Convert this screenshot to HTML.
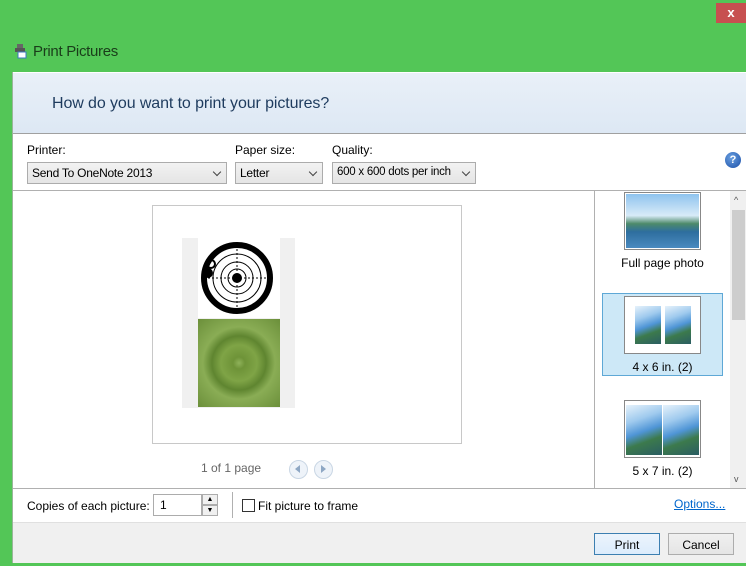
<!DOCTYPE html>
<html><head><style>
*{box-sizing:border-box;margin:0;padding:0}
body{width:746px;height:566px;background:#53c657;position:relative;overflow:hidden;font-family:"Liberation Sans",sans-serif;font-size:12px;color:#000}
.a{position:absolute}
.sel{position:absolute;height:22px;border:1px solid #acacac;background:linear-gradient(#f2f2f2,#e5e5e5);padding:3px 0 0 4px;font-size:12px;letter-spacing:-0.25px;white-space:nowrap}
.sel:after{content:"";position:absolute;right:6px;top:6px;width:5px;height:5px;border-right:1px solid #444;border-bottom:1px solid #444;transform:rotate(45deg)}
.btn{position:absolute;height:22px;border:1px solid #adadad;background:linear-gradient(#f0f0f0,#e5e5e5);text-align:center;padding-top:4px;font-size:12px}
.th{position:absolute;border:1px solid #888;background:#fff}
.ph{position:absolute;background:linear-gradient(160deg,#e6f2fb 0%,#9fcaee 30%,#4f95d6 52%,#3c7a4c 70%,#2a5d63 100%)}
</style></head><body>
<div class="a" style="left:716px;top:3px;width:30px;height:20px;background:#c75050;color:#fff;font-size:13px;text-align:center;line-height:20px;font-weight:bold">x</div>
<svg class="a" style="left:15px;top:44px" width="12" height="15"><rect x="2" y="0" width="6" height="4" fill="#666"/><rect x="0" y="4" width="10" height="4" fill="#555"/><rect x="3" y="8" width="8" height="6" fill="#fff" stroke="#3b7bbf"/></svg>
<div class="a" style="left:33px;top:43px;font-size:15px;color:#1a3d1a;letter-spacing:-0.3px">Print Pictures</div>
<div class="a" style="left:12px;top:72px;width:734px;height:491px;background:#fff;border-left:1px solid #9ab59a"></div>
<div class="a" style="left:13px;top:73px;width:733px;height:61px;background:linear-gradient(#e9f0f8,#dde8f4);border-bottom:1px solid #a0a0a0"></div>
<div class="a" style="left:52px;top:95px;font-size:16px;color:#1e3b5e;letter-spacing:-0.1px">How do you want to print your pictures?</div>
<div class="a" style="left:27px;top:143px">Printer:</div>
<div class="a" style="left:235px;top:143px">Paper size:</div>
<div class="a" style="left:332px;top:143px">Quality:</div>
<div class="sel" style="left:27px;top:162px;width:200px">Send To OneNote 2013</div>
<div class="sel" style="left:235px;top:162px;width:88px">Letter</div>
<div class="sel" style="left:332px;top:162px;width:144px;font-size:11.5px">600 x 600 dots per inch</div>
<div class="a" style="left:725px;top:152px;width:16px;height:16px;border-radius:50%;background:radial-gradient(circle at 40% 35%,#6aa0e0,#1b4fa8);color:#fff;font-weight:bold;font-size:11px;text-align:center;line-height:16px">?</div>
<div class="a" style="left:13px;top:190px;width:733px;height:1px;background:#b0b0b0"></div>
<div class="a" style="left:152px;top:205px;width:310px;height:239px;border:1px solid #c8c8c8"></div>
<div class="a" style="left:182px;top:238px;width:113px;height:170px;background:#f0f0f0"></div>
<div class="a" style="left:198px;top:238px;width:82px;height:80px;background:#fff"></div>
<svg class="a" style="left:200px;top:240px" width="78" height="76"><circle cx="37" cy="38" r="33" fill="none" stroke="#000" stroke-width="6"/><circle cx="37" cy="38" r="24" fill="none" stroke="#000"/><circle cx="37" cy="38" r="16" fill="none" stroke="#000"/><circle cx="37" cy="38" r="9" fill="none" stroke="#000"/><circle cx="37" cy="38" r="5" fill="#000"/><circle cx="8" cy="33" r="5" fill="#000"/><circle cx="11" cy="24" r="4" fill="none" stroke="#000" stroke-width="2"/><line x1="4" y1="38" x2="70" y2="38" stroke="#000" stroke-dasharray="2 2"/><line x1="37" y1="5" x2="37" y2="71" stroke="#000" stroke-dasharray="2 2"/></svg>
<div class="a" style="left:198px;top:319px;width:82px;height:88px;background:radial-gradient(circle at 50% 50%,#8fb25a 0,#6e9338 10%,#7fa446 30%,#5f8530 45%,#8aad55 60%,#6b8f3a 100%)"></div>
<div class="a" style="left:201px;top:461px;color:#666">1 of 1 page</div>
<div class="a" style="left:289px;top:460px;width:19px;height:19px;border-radius:50%;border:1px solid #c9d6e4;background:#eef3f9"></div>
<div class="a" style="left:314px;top:460px;width:19px;height:19px;border-radius:50%;border:1px solid #c9d6e4;background:#eef3f9"></div>
<div class="a" style="left:295px;top:465px;width:0;height:0;border:4px solid transparent;border-right:5px solid #8ea7c4;border-left:0"></div>
<div class="a" style="left:321px;top:465px;width:0;height:0;border:4px solid transparent;border-left:5px solid #8ea7c4;border-right:0"></div>
<div class="a" style="left:594px;top:191px;width:1px;height:297px;background:#b0b0b0"></div>
<div class="a" style="left:730px;top:191px;width:16px;height:297px;background:#f0f0f0"></div>
<div class="a" style="left:732px;top:210px;width:13px;height:110px;background:#cdcdcd"></div>
<div class="a" style="left:734px;top:195px;font-size:9px;color:#555">^</div>
<div class="a" style="left:734px;top:474px;font-size:9px;color:#555">v</div>
<div class="th" style="left:624px;top:192px;width:77px;height:58px"><div class="ph" style="left:1px;top:1px;width:73px;height:54px;background:linear-gradient(#8fc3ee 0%,#d8ebf8 40%,#4d8a6a 55%,#2e6e9e 70%,#4a8ac0 100%)"></div></div>
<div class="a" style="left:595px;top:256px;width:135px;text-align:center">Full page photo</div>
<div class="a" style="left:602px;top:293px;width:121px;height:83px;background:#cde8f7;border:1px solid #5ea8d6"></div>
<div class="th" style="left:624px;top:296px;width:77px;height:58px"><div class="ph" style="left:10px;top:9px;width:26px;height:38px"></div><div class="ph" style="left:40px;top:9px;width:26px;height:38px"></div></div>
<div class="a" style="left:595px;top:360px;width:135px;text-align:center">4 x 6 in. (2)</div>
<div class="th" style="left:624px;top:400px;width:77px;height:58px"><div class="ph" style="left:1px;top:4px;width:36px;height:50px"></div><div class="ph" style="left:38px;top:4px;width:36px;height:50px"></div></div>
<div class="a" style="left:595px;top:464px;width:135px;text-align:center">5 x 7 in. (2)</div>
<div class="a" style="left:13px;top:488px;width:733px;height:1px;background:#b0b0b0"></div>
<div class="a" style="left:27px;top:499px">Copies of each picture:</div>
<div class="a" style="left:153px;top:494px;width:49px;height:22px;border:1px solid #acacac;padding:3px 0 0 6px">1</div>
<div class="a" style="left:202px;top:494px;width:16px;height:11px;border:1px solid #acacac;background:#f0f0f0;font-size:7px;text-align:center;line-height:9px">▲</div>
<div class="a" style="left:202px;top:505px;width:16px;height:11px;border:1px solid #acacac;background:#f0f0f0;font-size:7px;text-align:center;line-height:9px">▼</div>
<div class="a" style="left:232px;top:492px;width:1px;height:26px;background:#b0b0b0"></div>
<div class="a" style="left:242px;top:499px;width:13px;height:13px;border:1px solid #333;background:#fff"></div>
<div class="a" style="left:258px;top:499px">Fit picture to frame</div>
<div class="a" style="left:674px;top:497px;color:#0066cc;text-decoration:underline">Options...</div>
<div class="a" style="left:13px;top:522px;width:733px;height:41px;background:#f0f0f0;border-top:1px solid #e0e0e0"></div>
<div class="btn" style="left:594px;top:533px;width:66px;border-color:#3c7fb1;background:linear-gradient(#ecf4fc,#dcecfc)">Print</div>
<div class="btn" style="left:668px;top:533px;width:66px">Cancel</div>
</body></html>
